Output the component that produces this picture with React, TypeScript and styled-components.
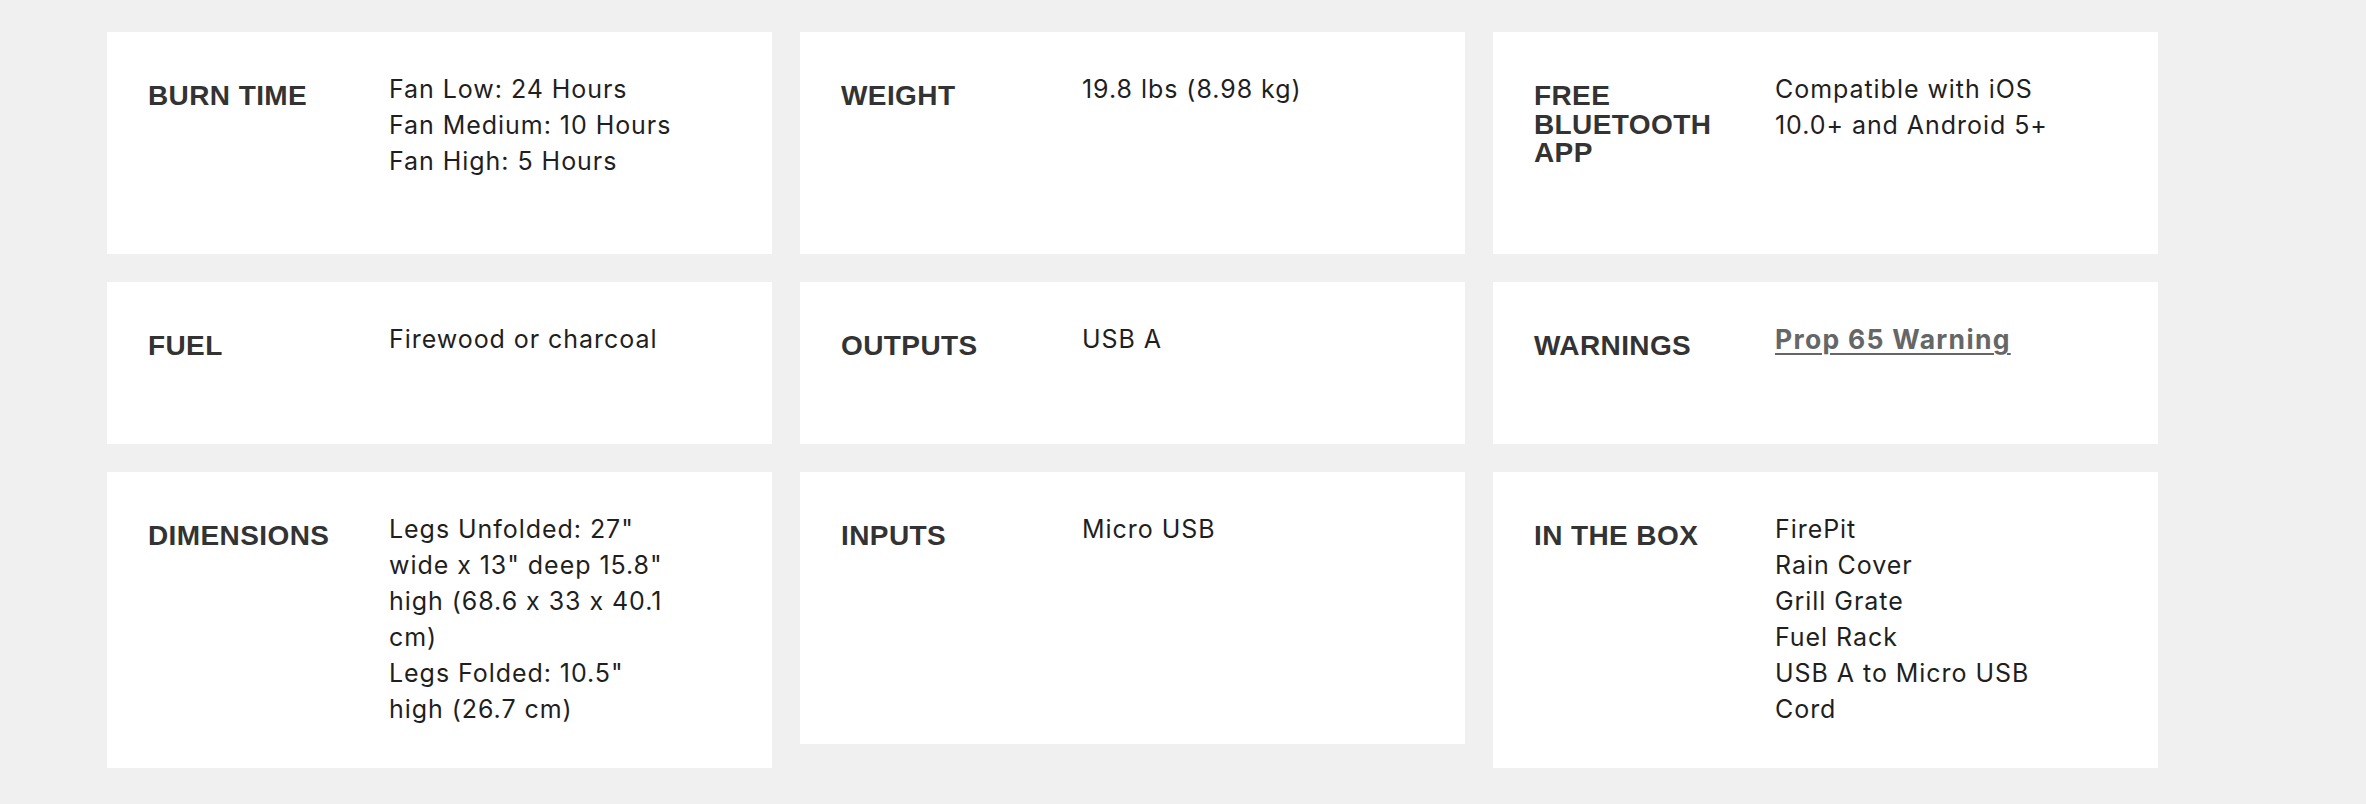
import React from "react";
import styled, { createGlobalStyle } from "styled-components";

const GlobalStyle = createGlobalStyle`
  html, body {
    margin: 0;
    padding: 0;
    background: #f0f0f0;
  }
  body {
    font-family: Inter, "Liberation Sans", sans-serif;
    -webkit-font-smoothing: antialiased;
  }
`;

const Page = styled.div`
  min-height: 804px;
  box-sizing: border-box;
  padding: 32px 0 0 107px;
`;

const SpecGrid = styled.dl`
  margin: 0;
  display: grid;
  grid-template-columns: repeat(3, 665px);
  grid-template-rows: 222px 162px 296px;
  column-gap: 28px;
  row-gap: 28px;
`;

const Card = styled.div<{ $short?: boolean }>`
  background: #fff;
  box-sizing: border-box;
  padding: 39px 40px 0 41px;
  display: grid;
  grid-template-columns: 241px 290px;
  align-content: start;
  align-self: ${(p) => (p.$short ? "start" : "stretch")};
  height: ${(p) => (p.$short ? "272px" : "auto")};
`;

const Label = styled.dt`
  margin: 11px 0 0;
  width: 200px;
  font-family: "Liberation Sans", Arial, sans-serif;
  font-weight: 700;
  font-size: 28px;
  line-height: 28.5px;
  letter-spacing: 0.4px;
  color: #333;
  text-transform: uppercase;
`;

const Value = styled.dd`
  margin: 0;
  font-family: Inter, "Liberation Sans", sans-serif;
  font-size: 25px;
  line-height: 36px;
  letter-spacing: 0.95px;
  color: #1f1f1f;
`;

const Line = styled.div``;

const WarningLink = styled.a`
  font-family: Inter, "Liberation Sans", sans-serif;
  font-weight: 700;
  font-size: 26.5px;
  letter-spacing: 1.3px;
  color: #666;
  text-decoration: underline;
  text-decoration-thickness: 2px;
  text-underline-offset: 4px;
`;

type Spec = {
  label: string;
  lines?: string[];
  link?: string;
  short?: boolean;
};

const specs: Spec[] = [
  { label: "Burn Time", lines: ["Fan Low: 24 Hours", "Fan Medium: 10 Hours", "Fan High: 5 Hours"] },
  { label: "Weight", lines: ["19.8 lbs (8.98 kg)"] },
  { label: "Free Bluetooth App", lines: ["Compatible with iOS 10.0+ and Android 5+"] },
  { label: "Fuel", lines: ["Firewood or charcoal"] },
  { label: "Outputs", lines: ["USB A"] },
  { label: "Warnings", link: "Prop 65 Warning" },
  {
    label: "Dimensions",
    lines: [
      'Legs Unfolded: 27" wide x 13" deep 15.8" high (68.6 x 33 x 40.1 cm)',
      'Legs Folded: 10.5" high (26.7 cm)',
    ],
  },
  { label: "Inputs", lines: ["Micro USB"], short: true },
  {
    label: "In the Box",
    lines: ["FirePit", "Rain Cover", "Grill Grate", "Fuel Rack", "USB A to Micro USB Cord"],
  },
];

const App = () => {
  return (
    <>
      <GlobalStyle />
      <Page>
        <SpecGrid>
          {specs.map((spec) => (
            <Card key={spec.label} $short={spec.short}>
              <Label>{spec.label}</Label>
              <Value>
                {spec.link ? (
                  <WarningLink href="#">{spec.link}</WarningLink>
                ) : (
                  spec.lines?.map((line) => <Line key={line}>{line}</Line>)
                )}
              </Value>
            </Card>
          ))}
        </SpecGrid>
      </Page>
    </>
  );
};

export default App;
